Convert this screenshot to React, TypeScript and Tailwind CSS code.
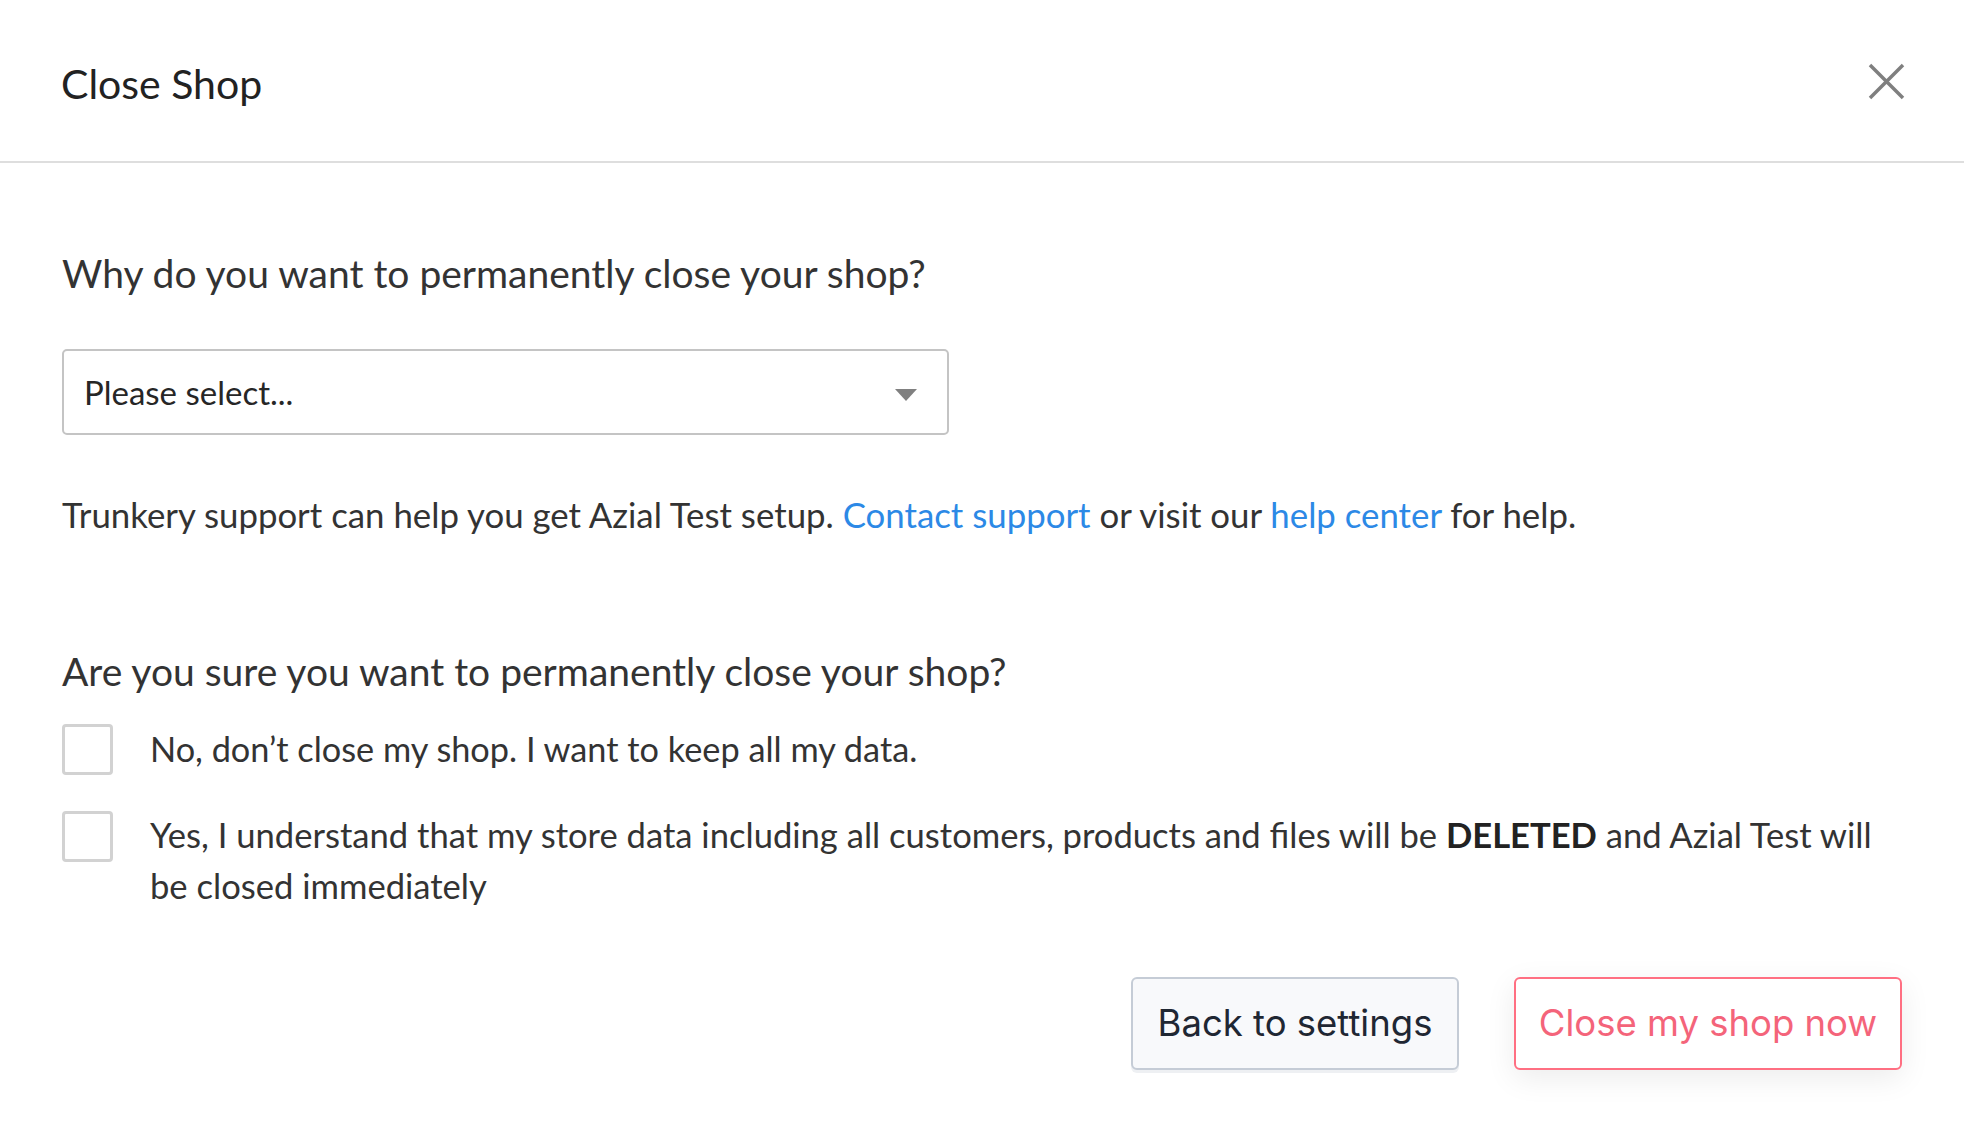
import { useState } from 'react';

function Checkbox({ checked, onChange }: { checked: boolean; onChange: () => void }) {
  return (
    <button
      onClick={onChange}
      className="shrink-0 w-[51px] h-[51px] rounded-[4px] border-[3px] border-[#d2d2d2] bg-white flex items-center justify-center"
    >
      {checked && (
        <svg width="28" height="28" viewBox="0 0 24 24" fill="none" stroke="#2c89e6" strokeWidth="3">
          <path d="M4 12l5 5L20 6" />
        </svg>
      )}
    </button>
  );
}

export default function App() {
  const [keep, setKeep] = useState(false);
  const [confirm, setConfirm] = useState(false);

  return (
    <div className="w-full h-[1136px] bg-white text-[#333333]" style={{ fontFamily: 'Lato, "Open Sans", sans-serif' }}>
      {/* ── Header ── */}
      <div className="h-[163px] px-[61px] pt-[6px] flex items-center justify-between border-b-2 border-[#dedede]">
        <h1 className="text-[41px] leading-[48px] text-[#222222]">Close Shop</h1>
        <button className="w-[40px] h-[40px] flex items-center justify-center -mr-[3px] -mt-[4px]">
          <svg width="37" height="37" viewBox="0 0 37 37" stroke="#7f7f7f" strokeWidth="3.5">
            <path d="M2 2L35 35M35 2L2 35" />
          </svg>
        </button>
      </div>

      {/* ── Body ── */}
      <div className="px-[62px]">
        <h2 className="mt-[87px] text-[39px] leading-[46px] text-[#333333]">
          Why do you want to permanently close your shop?
        </h2>

        <div className="mt-[53px] w-[887px] h-[86px] rounded-[5px] border-2 border-[#c4c4c4] pl-[20px] pr-[30px] flex items-center justify-between">
          <span className="text-[33px] text-[#262626] mt-[2px]">Please select...</span>
          <svg width="22" height="12" viewBox="0 0 22 12" className="mt-[6px]">
            <path d="M0 0H22L11 12Z" fill="#808080" />
          </svg>
        </div>

        <p className="mt-[59px] text-[34.8px] leading-[41px]">
          Trunkery support can help you get Azial Test setup.{' '}
          <a className="text-[#2c89e6]">Contact support</a> or visit our{' '}
          <a className="text-[#2c89e6]">help center</a> for help.
        </p>

        <h2 className="mt-[113px] text-[39px] leading-[46px]">
          Are you sure you want to permanently close your shop?
        </h2>

        <div className="mt-[29px] flex flex-col gap-[34px]">
          <div className="flex items-start gap-[37px]">
            <div className="mt-[1px]">
              <Checkbox checked={keep} onChange={() => setKeep(k => !k)} />
            </div>
            <span className="text-[34.3px] leading-[51px]">No, don’t close my shop. I want to keep all my data.</span>
          </div>
          <div className="flex items-start gap-[37px]">
            <div className="mt-[2px]">
              <Checkbox checked={confirm} onChange={() => setConfirm(c => !c)} />
            </div>
            <span className="text-[34.6px] leading-[51px]">
              Yes, I understand that my store data including all customers, products and files will be{' '}
              <b className="font-bold text-[#222222]">DELETED</b> and Azial Test will be closed immediately
            </span>
          </div>
        </div>

        <div className="mt-[66px] flex justify-end gap-[55px]" style={{ fontFamily: 'Inter, "Noto Sans", sans-serif' }}>
          <button className="w-[328px] h-[93px] rounded-[6px] border-2 border-[#c5ccd6] bg-[#f8f9fb] text-[36.5px] text-[#1f2733] shadow-[0_3px_0_#eef0f3]">
            Back to settings
          </button>
          <button className="w-[388px] h-[93px] rounded-[6px] border-2 border-[#ff6f82] bg-white text-[36.5px] text-[#f4647a] shadow-[0_8px_30px_rgba(0,0,0,0.08)]">
            Close my shop now
          </button>
        </div>
      </div>
    </div>
  );
}
